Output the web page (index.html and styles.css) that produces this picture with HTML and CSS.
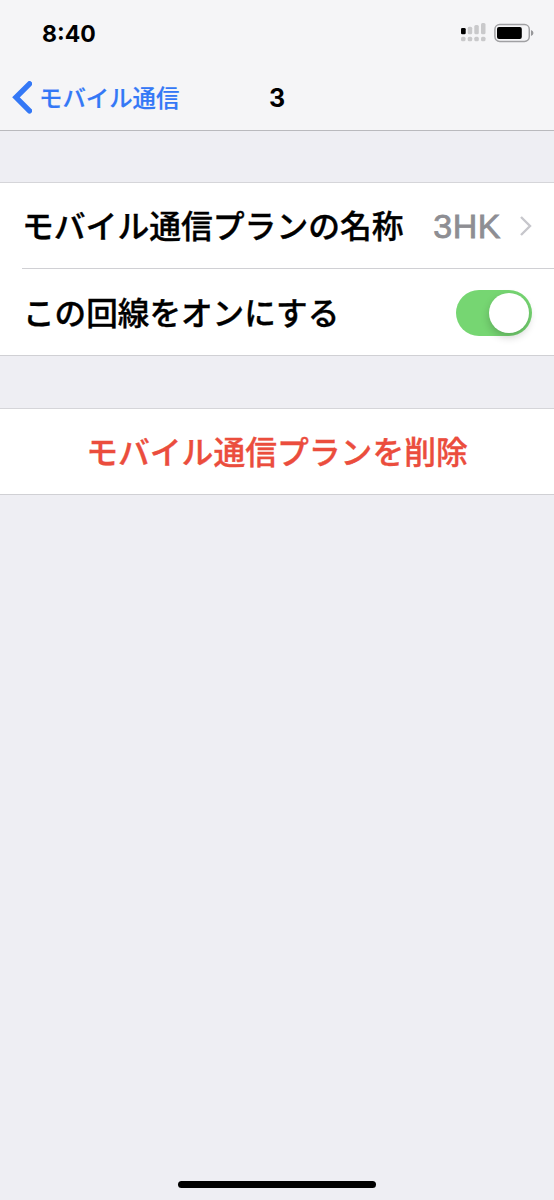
FILE: index.html
```html
<!DOCTYPE html>
<html lang="ja">
<head>
<meta charset="utf-8">
<title>モバイル通信</title>
<link rel="stylesheet" href="styles.css">
</head>
<body>
<div class="screen">
  <header class="header">
    <div class="status">
      <span class="time">8:40</span>
      <span class="indicators">
        <svg class="signal" width="26" height="20" viewBox="0 0 26 20">
          <g fill="#c9c9cb"><rect x="6.700" y="3.700" width="4.500" height="7.500" rx="1.500"/><rect x="13.300" y="2" width="4.500" height="9.200" rx="1.500"/><rect x="20" y="0" width="4.500" height="11.200" rx="1.500"/><rect x="0" y="13.800" width="4.500" height="4.400" rx="1.500"/><rect x="6.700" y="13.800" width="4.500" height="4.400" rx="1.500"/><rect x="13.300" y="13.800" width="4.500" height="4.400" rx="1.500"/><rect x="20" y="13.800" width="4.500" height="4.400" rx="1.500"/></g>
          <rect x="0" y="5" width="4.700" height="6.200" rx="1.300"/>
        </svg>
        <svg class="battery" width="40" height="20" viewBox="0 0 40 20">
          <rect x=".9" y="1.600" width="34.400" height="16.800" rx="4.800" fill="none" stroke="#a0a0a3" stroke-width="1.500"/>
          <rect x="3" y="4" width="24.800" height="12" rx="2"/>
          <path d="M37 7q2.500 1 2.500 3T37 13z" fill="#97979a"/>
        </svg>
      </span>
    </div>
    <nav class="nav">
      <a class="back"><svg width="21" height="34" viewBox="0 0 21 34"><path d="M18.500 2.800 5 16.300 18.500 29.800" fill="none" stroke="#3478f6" stroke-width="5.400" stroke-linecap="round"/></svg><span>モバイル通信</span></a>
      <h1 class="title">3</h1>
    </nav>
  </header>
  <main>
    <section class="group">
      <div class="row"><span class="label">モバイル通信プランの名称</span><span class="value">3HK</span><svg class="chevron" width="13" height="22" viewBox="0 0 13 22"><path d="M2 2 11 11 2 20" fill="none" stroke="#c7c7cc" stroke-width="2.400"/></svg></div>
      <div class="row toggle-row"><span class="label">この回線をオンにする</span><span class="switch"><span class="knob"></span></span></div>
    </section>
    <section class="group actions">
      <div class="row delete">モバイル通信プランを削除</div>
    </section>
  </main>
  <div class="home"></div>
</div>
</body>
</html>
```
FILE: styles.css
```css
* { box-sizing: border-box; }
body { margin: 0; font-family: "Liberation Sans", "Noto Sans CJK JP", sans-serif; }
.screen { width: 554px; height: 1200px; background: #eeeef3; display: flex; flex-direction: column; overflow: hidden; }
main { flex: 1; }
.header { height: 131px; background: #f5f5f7; border-bottom: 1px solid #b9b9bd; }
.status { height: 66px; display: flex; justify-content: space-between; padding: 0 20px 0 42px; }
.time { font: 700 23px/68px Inter, sans-serif; }
.indicators { display: flex; gap: 7px; padding-top: 23px; }
.nav { height: 63px; display: grid; grid-template-columns: 1fr auto 1fr; align-items: center; }
.back { display: flex; align-items: center; gap: 7px; padding-left: 11px; color: #3478f6; font: 500 23.400px/30px "Noto Sans CJK JP", sans-serif; white-space: nowrap; -webkit-text-stroke: .2px; }
.back span { padding-bottom: 2px; }
.title { margin: 0; font: 700 25px/30px Inter, sans-serif; }
.group { margin-top: 51px; background: #fff; border-top: 1px solid #d5d5d9; border-bottom: 1px solid #d0d0d4; }
.row { display: flex; align-items: center; height: 85px; padding: 0 22px; font: 500 31.800px/40px "Noto Sans CJK JP", sans-serif; -webkit-text-stroke: .35px; white-space: nowrap; }
.label { flex: 1; padding-bottom: 3px; }
.value { color: #8e8e93; font: 400 34px/40px "Liberation Sans", sans-serif; letter-spacing: .5px; padding-top: 1px; -webkit-text-stroke: .8px; }
.chevron { margin-left: 18px; }
.toggle-row { height: 87px; margin-left: 22px; padding-left: 0; border-top: 1px solid #d0d0d4; }
.toggle-row .label { padding-left: 1px; padding-bottom: 2px; font-size: 31.600px; }
.switch { width: 76px; height: 46px; margin-top: 1px; border-radius: 23px; background: #76d672; padding: 3px; display: flex; justify-content: flex-end; }
.knob { width: 40px; height: 40px; border-radius: 50%; background: #fff; box-shadow: 0 4px 8px rgba(0,0,0,.2); }
.actions { margin-top: 52px; }
.delete { justify-content: center; color: #eb4d3d; padding-bottom: 4px; }
.home { width: 198px; height: 7px; border-radius: 4px; background: #000; margin: 0 auto 12px; }
```
